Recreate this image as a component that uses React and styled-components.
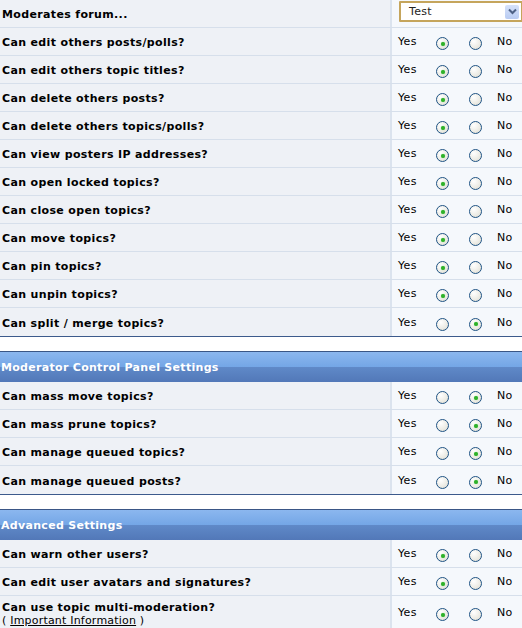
import React from "react";
import styled, { createGlobalStyle } from "styled-components";

const GlobalStyle = createGlobalStyle`
  html, body {
    margin: 0;
    padding: 0;
    background: #ffffff;
  }
  body {
    font-family: "DejaVu Sans", Verdana, sans-serif;
    font-size: 11px;
    color: #000;
  }
`;

const Page = styled.div`
  width: 522px;
  display: flex;
  flex-direction: column;
`;

const Section = styled.div`
  display: flex;
  flex-direction: column;
  border-bottom: 1px solid #3c5a8c;
  margin-bottom: ${(p) => (p.$last ? "0" : "14px")};
`;

const Header = styled.div`
  border-top: 1px solid #3a5686;
  background: linear-gradient(
    to bottom,
    #8bb7ef 0%,
    #74a6e6 50%,
    #5f89c8 51%,
    #5278b8 100%
  );
  color: #fff;
  font-weight: bold;
  font-size: 11px;
  display: flex;
  align-items: center;
  padding-left: 1px;
  padding-top: 1px;
  box-sizing: border-box;
  height: 31px;
  letter-spacing: 0.3px;
`;

const Row = styled.div`
  display: grid;
  grid-template-columns: 392px 1fr;
  min-height: ${(p) => p.$h || 28}px;
  border-bottom: ${(p) => (p.$noline ? "0" : "1px solid #d6dfeb")};
  box-sizing: border-box;
`;

const Label = styled.div`
  background: #eef1f6;
  border-right: 2px solid #dbe3ee;
  display: flex;
  flex-direction: column;
  justify-content: center;
  padding: 2px 0 0 2px;
  font-weight: bold;
  line-height: 13px;
  letter-spacing: 0.35px;
`;

const Note = styled.span`
  font-weight: normal;
  letter-spacing: 0.2px;
  a {
    color: #000;
    text-decoration: underline;
  }
`;

const Choice = styled.div`
  background: #f5f8fc;
  display: flex;
  align-items: center;
  padding-left: ${(p) => (p.$flush ? 0 : 6)}px;
`;

const Word = styled.span`
  width: ${(p) => p.$w}px;
  letter-spacing: 0.3px;
`;

const Radio = styled.span`
  width: 11px;
  height: 11px;
  border: 1px solid #1f5384;
  border-radius: 50%;
  background: radial-gradient(circle at 35% 30%, #ffffff 0%, #ecebe4 60%, #d6d5cc 100%);
  margin-right: ${(p) => p.$mr}px;
  position: relative;
  top: 2px;
  display: flex;
  align-items: center;
  justify-content: center;
  &::after {
    content: "";
    display: ${(p) => (p.$on ? "block" : "none")};
    width: 4px;
    height: 4px;
    border-radius: 50%;
    background: #2fb02a;
    box-shadow: 0 0 1px #63d35c;
  }
`;

const Select = styled.div`
  margin: 1px 0 0 7px;
  align-self: flex-start;
  width: 112px;
  height: 17px;
  border: 2px solid #c5a55c;
  background: #fff;
  display: flex;
  align-items: center;
  justify-content: space-between;
  font-weight: normal;
  font-size: 11px;
  letter-spacing: 0.3px;
  color: #222;
  padding-left: 8px;
  box-sizing: content-box;
  border-radius: 1px;
`;

const Arrow = styled.span`
  width: 14px;
  height: 14px;
  margin-right: 2px;
  background: linear-gradient(to bottom, #d6e2fa, #b8cbf2);
  border-radius: 2px;
  display: flex;
  align-items: center;
  justify-content: center;
`;

const YesNo = ({ yes }) => (
  <Choice>
    <Word $w={38}>Yes</Word>
    <Radio $on={yes} $mr={20} />
    <Radio $on={!yes} $mr={15} />
    <Word>No</Word>
  </Choice>
);

const general = [
  ["Can edit others posts/polls?", true],
  ["Can edit others topic titles?", true],
  ["Can delete others posts?", true],
  ["Can delete others topics/polls?", true],
  ["Can view posters IP addresses?", true],
  ["Can open locked topics?", true],
  ["Can close open topics?", true],
  ["Can move topics?", true],
  ["Can pin topics?", true],
  ["Can unpin topics?", true],
  ["Can split / merge topics?", false],
];

const mcp = [
  ["Can mass move topics?", false],
  ["Can mass prune topics?", false],
  ["Can manage queued topics?", false],
  ["Can manage queued posts?", false],
];

const advanced = [
  ["Can warn other users?", true],
  ["Can edit user avatars and signatures?", true],
];

export default function App() {
  return (
    <Page>
      <GlobalStyle />
      <Section>
        <Row>
          <Label>Moderates forum...</Label>
          <Choice $flush>
            <Select>
              <span>Test</span>
              <Arrow>
                <svg width="9" height="7" viewBox="0 0 9 7">
                  <path d="M1 1.5 L4.5 5 L8 1.5" fill="none" stroke="#4d6185" strokeWidth="2" />
                </svg>
              </Arrow>
            </Select>
          </Choice>
        </Row>
        {general.map(([t, y], i) => (
          <Row key={t} $noline={i === general.length - 1}>
            <Label>{t}</Label>
            <YesNo yes={y} />
          </Row>
        ))}
      </Section>

      <Section>
        <Header>Moderator Control Panel Settings</Header>
        {mcp.map(([t, y], i) => (
          <Row key={t} $noline={i === mcp.length - 1}>
            <Label>{t}</Label>
            <YesNo yes={y} />
          </Row>
        ))}
      </Section>

      <Section $last>
        <Header>Advanced Settings</Header>
        {advanced.map(([t, y]) => (
          <Row key={t}>
            <Label>{t}</Label>
            <YesNo yes={y} />
          </Row>
        ))}
        <Row $h={33} $noline>
          <Label>
            <span>Can use topic multi-moderation?</span>
            <Note>
              ( <a href="#">Important Information</a> )
            </Note>
          </Label>
          <YesNo yes />
        </Row>
      </Section>
    </Page>
  );
}
